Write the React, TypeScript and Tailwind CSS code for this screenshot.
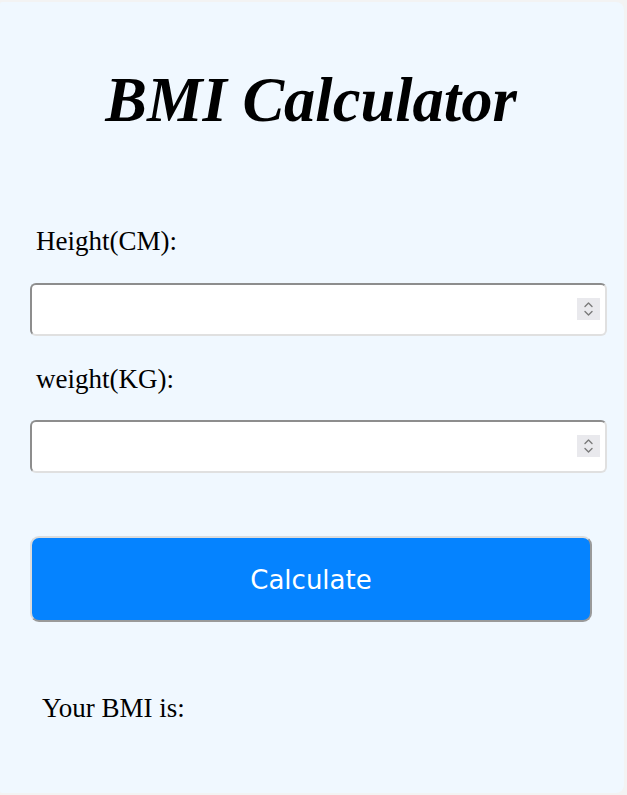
import React from "react";

function Spinner() {
  return (
    <div className="w-[23px] h-[22px] bg-[#e9e9ed] flex items-center justify-center">
      <svg width="13" height="18" viewBox="0 0 13 18" fill="none" stroke="#7a7a7a" strokeWidth="1.4" strokeLinecap="round" strokeLinejoin="round">
        <path d="M3 6.5 L6.5 3 L10 6.5" />
        <path d="M3 11.5 L6.5 15 L10 11.5" />
      </svg>
    </div>
  );
}

function NumberField() {
  return (
    <div className="ml-[30px] w-[577px] h-[53px] bg-white rounded-[6px] border-2 border-t-[#8d8d8d] border-l-[#8d8d8d] border-b-[#e0e0e0] border-r-[#e0e0e0] flex items-center pr-[5px]">
      <input type="text" className="flex-1 h-full bg-transparent outline-none px-2 text-[20px]" />
      <Spinner />
    </div>
  );
}

export default function App() {
  const serif = { fontFamily: '"Liberation Serif", "Times New Roman", serif' };
  return (
    <div className="w-[627px] h-[795px] bg-[#f3f3f3] pt-[2px] pr-[3px] pb-[2px]">
      <div className="h-[791px] bg-[#f0f8ff] rounded-r-[8px] rounded-l-[2px] flex flex-col" style={serif}>
        <h1 className="mt-[67px] text-center text-[62.5px] leading-none font-bold italic text-black pr-[2px]">
          BMI Calculator
        </h1>
        <label className="mt-[96px] ml-[36px] text-[27px] leading-none text-black">Height(CM):</label>
        <div className="mt-[28px]">
          <NumberField />
        </div>
        <label className="mt-[30px] ml-[36px] text-[27px] leading-none text-black">weight(KG):</label>
        <div className="mt-[27px]">
          <NumberField />
        </div>
        <div className="mt-[63px] ml-[30px]">
          <button
            className="w-[562px] h-[86px] pt-[4px] rounded-[9px] bg-[#0583ff] text-white text-[26px] border-2 border-t-[#dcdcdc] border-l-[#dcdcdc] border-b-[#9a9a9a] border-r-[#9a9a9a]"
            style={{ fontFamily: '"DejaVu Sans", Verdana, sans-serif' }}
          >
            Calculate
          </button>
        </div>
        <p className="mt-[73px] ml-[42px] text-[27px] leading-none text-black">Your BMI is:</p>
      </div>
    </div>
  );
}
